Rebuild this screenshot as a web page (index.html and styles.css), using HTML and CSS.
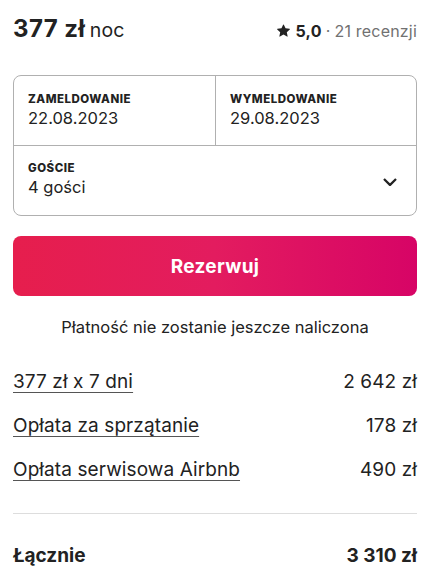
FILE: index.html
```html
<!DOCTYPE html>
<html lang="pl">
<head>
    <meta charset="UTF-8">
    <meta name="viewport" content="width=device-width, initial-scale=1.0">
    <title>Rezerwacja</title>
    <link rel="stylesheet" href="styles.css">
</head>
<body>
    <div class="booking">
        <!-- Price and rating -->
        <div class="booking-header">
            <div class="price"><span class="price-value">377 zł</span> <span class="price-unit">noc</span></div>
            <div class="rating">
                <svg class="star" viewBox="0 0 32 32" aria-hidden="true"><path d="M15.1 1.58l-4.13 8.88-9.86 1.27a1 1 0 0 0-.54 1.74l7.3 6.57-1.97 9.85a1 1 0 0 0 1.48 1.06l8.62-5 8.63 5a1 1 0 0 0 1.48-1.06l-1.97-9.85 7.3-6.57a1 1 0 0 0-.55-1.73l-9.86-1.28-4.12-8.88a1 1 0 0 0-1.82 0z"/></svg>
                <span class="rating-score">5,0</span>
                <span class="rating-dot">·</span>
                <span class="rating-count">21 recenzji</span>
            </div>
        </div>

        <!-- Dates and guests -->
        <div class="picker">
            <div class="picker-dates">
                <div class="picker-cell">
                    <div class="picker-label">Zameldowanie</div>
                    <div class="picker-value">22.08.2023</div>
                </div>
                <div class="picker-cell picker-cell-right">
                    <div class="picker-label">Wymeldowanie</div>
                    <div class="picker-value">29.08.2023</div>
                </div>
            </div>
            <div class="picker-cell picker-guests">
                <div>
                    <div class="picker-label">Goście</div>
                    <div class="picker-value">4 gości</div>
                </div>
                <svg class="chevron" viewBox="0 0 32 32" aria-hidden="true"><path d="M28 12 16.7 23.3a1 1 0 0 1-1.4 0L4 12"/></svg>
            </div>
        </div>

        <button class="reserve">Rezerwuj</button>
        <p class="note">Płatność nie zostanie jeszcze naliczona</p>

        <!-- Price breakdown -->
        <div class="breakdown">
            <div class="line"><a href="#" class="line-label">377 zł x 7 dni</a><span>2 642 zł</span></div>
            <div class="line"><a href="#" class="line-label">Opłata za sprzątanie</a><span>178 zł</span></div>
            <div class="line"><a href="#" class="line-label">Opłata serwisowa Airbnb</a><span>490 zł</span></div>
        </div>

        <div class="total">
            <span>Łącznie</span>
            <span>3 310 zł</span>
        </div>
    </div>
</body>
</html>
```

FILE: styles.css
```css
/* Page */
body {
    margin: 0;
    font-family: 'Inter', 'Liberation Sans', sans-serif;
    color: #222;
    background: #fff;
}

.booking {
    width: 404px;
    margin: 0 20px 0 13px;
}

/* Header */
.booking-header {
    display: flex;
    justify-content: space-between;
    align-items: baseline;
    padding-top: 14px;
    height: 75px;
    box-sizing: border-box;
}

.price-value {
    font-size: 24px;
    font-weight: 700;
    letter-spacing: 0.4px;
}

.price-unit {
    font-size: 19.5px;
    letter-spacing: 0.2px;
}

.rating {
    display: flex;
    align-items: center;
    gap: 4px;
    font-size: 16px;
    letter-spacing: 0.2px;
}

.star {
    width: 13px;
    height: 13px;
    fill: #222;
    margin-right: 2px;
}

.rating-score {
    font-weight: 700;
}

.rating-dot,
.rating-count {
    color: #717171;
}

/* Date and guest picker */
.picker {
    border: 1px solid #b0b0b0;
    border-radius: 8px;
}

.picker-dates {
    display: grid;
    grid-template-columns: 201px 1fr;
    border-bottom: 1px solid #b0b0b0;
}

.picker-cell {
    padding: 15px 14px 0 14px;
    height: 69px;
    box-sizing: border-box;
}

.picker-cell-right {
    border-left: 1px solid #b0b0b0;
}

.picker-guests {
    display: flex;
    justify-content: space-between;
    align-items: flex-start;
    padding-top: 14px;
    padding-right: 18px;
}

.picker-label {
    font-size: 11.5px;
    font-weight: 800;
    letter-spacing: 0.5px;
    text-transform: uppercase;
    line-height: 16px;
}

.picker-value {
    font-size: 16.5px;
    line-height: 22px;
}

.chevron {
    width: 16px;
    height: 16px;
    margin-top: 13px;
    fill: none;
    stroke: #222;
    stroke-width: 4.5;
}

/* Reserve button */
.reserve {
    display: block;
    width: 100%;
    height: 60px;
    margin-top: 20px;
    border: none;
    border-radius: 8px;
    background: linear-gradient(90deg, #e61e4d, #e31c5f 50%, #d70466);
    color: #fff;
    font-family: inherit;
    font-size: 19px;
    font-weight: 700;
    letter-spacing: 0.3px;
    cursor: pointer;
}

.note {
    margin: 20px 0 32px;
    text-align: center;
    font-size: 16.5px;
    line-height: 22px;
}

/* Breakdown */
.line {
    display: flex;
    justify-content: space-between;
    font-size: 19px;
    letter-spacing: 0.1px;
    line-height: 24px;
    margin-bottom: 20px;
}

.line-label {
    color: #222;
    text-decoration: underline;
    text-decoration-color: #555;
    text-decoration-thickness: 1px;
    text-underline-offset: 4px;
}

.total {
    display: flex;
    justify-content: space-between;
    border-top: 1px solid #dddddd;
    margin-top: 31px;
    padding-top: 30px;
    font-size: 19px;
    font-weight: 700;
    line-height: 24px;
}
```
